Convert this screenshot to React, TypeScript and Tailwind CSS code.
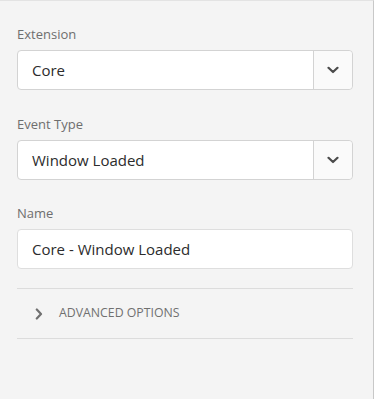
const font = { fontFamily: '"Open Sans", "Liberation Sans", sans-serif' };

function Chevron({ className }: { className?: string }) {
  return (
    <svg width="12" height="8" viewBox="0 0 12 8" className={className}>
      <path d="M1.5 1.8 L6 6 L10.5 1.8" fill="none" stroke="currentColor" strokeWidth="2.2" strokeLinecap="round" strokeLinejoin="round" />
    </svg>
  );
}

function Select({ value }: { value: string }) {
  return (
    <div className="flex h-[40px] rounded-[4px] border border-[#d3d3d3] bg-white">
      <div className="flex flex-1 items-center pl-[14px] text-[15px] text-[#2c2c2c]">{value}</div>
      <div className="flex w-[39px] items-center justify-center rounded-r-[4px] border-l border-[#d3d3d3] bg-[#fafafa] text-[#4b4b4b]">
        <Chevron />
      </div>
    </div>
  );
}

function Field({ label, children }: { label: string; children: React.ReactNode }) {
  return (
    <div className="flex flex-col">
      <label className="mb-[7px] text-[13px] leading-[17px] text-[#6e6e6e]">{label}</label>
      {children}
    </div>
  );
}

export default function App() {
  return (
    <div className="flex h-[399px] w-[386px] bg-white" style={font}>
      <div className="flex w-[374px] flex-col border-t border-r border-t-[#e3e3e3] border-r-[#c8c8c8] bg-[#f4f4f4] pl-[17px] pr-[20px] pt-[25px]">
        <div className="flex flex-col gap-[26px]">
          <Field label="Extension">
            <Select value="Core" />
          </Field>
          <Field label="Event Type">
            <Select value="Window Loaded" />
          </Field>
          <div className="-mt-[1px]">
            <Field label="Name">
              <div className="flex h-[40px] items-center rounded-[4px] border border-[#dedede] bg-white pl-[14px] text-[15px] text-[#2c2c2c]">
                Core - Window Loaded
              </div>
            </Field>
          </div>
        </div>
        <div className="mt-[19px] flex h-[51px] items-center border-y border-[#dcdcdc] pl-[18px] text-[#707070]">
          <svg width="8" height="12" viewBox="0 0 8 12">
            <path d="M1.8 1.5 L6 6 L1.8 10.5" fill="none" stroke="currentColor" strokeWidth="2.2" strokeLinecap="round" strokeLinejoin="round" />
          </svg>
          <span className="ml-[16px] text-[12.3px] uppercase">Advanced Options</span>
        </div>
      </div>
      <div className="flex-1" />
    </div>
  );
}
